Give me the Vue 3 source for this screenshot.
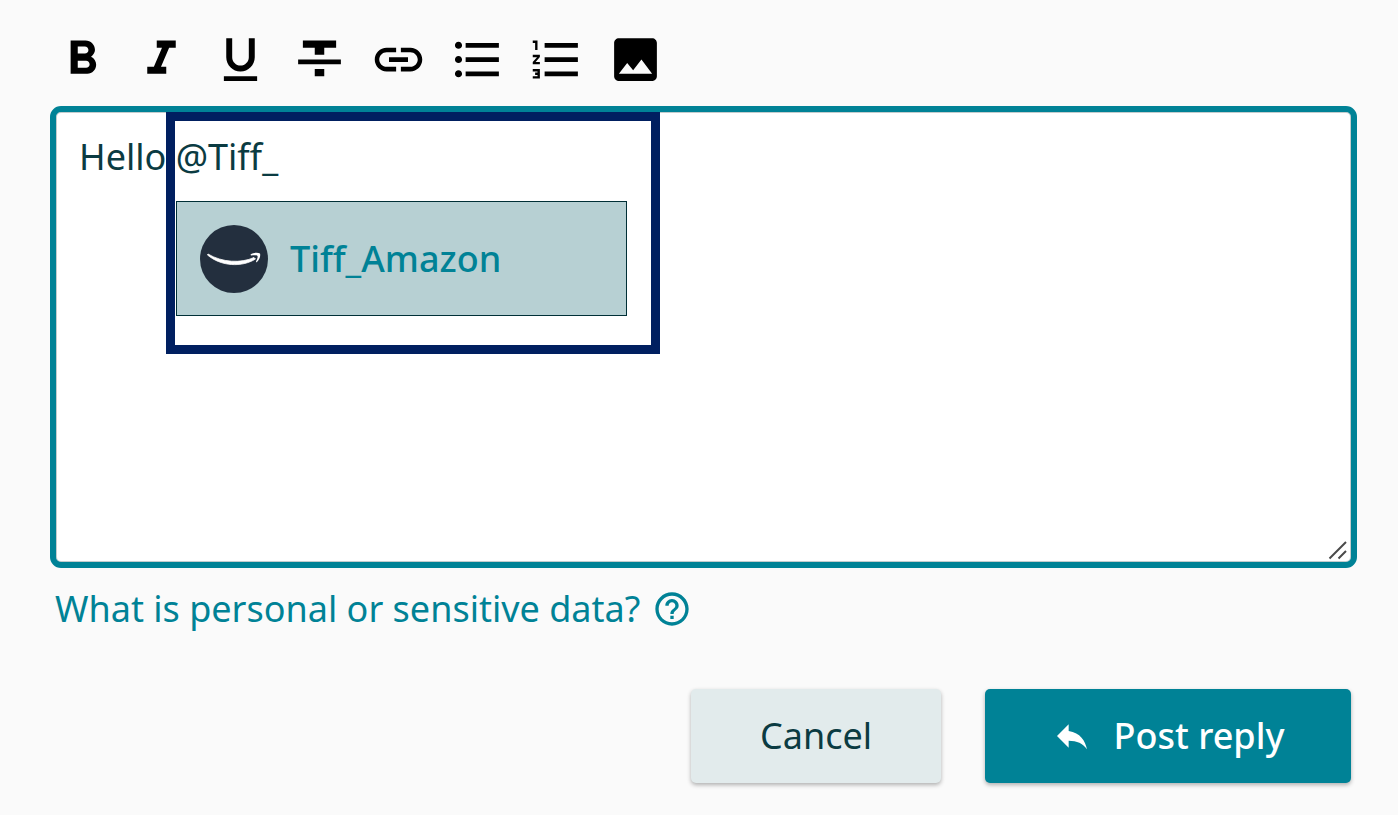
<script setup>
import { ref } from 'vue'

const message = ref('Hello @Tiff_')

const tools = [
  { label: 'Bold', path: 'M15.6 10.79c.97-.67 1.65-1.77 1.65-2.79 0-2.26-1.75-4-4-4H7v14h7.04c2.09 0 3.71-1.7 3.71-3.79 0-1.52-.86-2.82-2.15-3.42zM10 6.5h3c.83 0 1.5.67 1.5 1.5s-.67 1.5-1.5 1.5h-3v-3zm3.5 9H10v-3h3.5c.83 0 1.5.67 1.5 1.5s-.67 1.5-1.5 1.5z' },
  { label: 'Italic', path: 'M10 4v3h2.21l-3.42 8H6v3h8v-3h-2.21l3.42-8H18V4z' },
  { label: 'Underline', path: 'M12 17c3.31 0 6-2.69 6-6V3h-2.5v8c0 1.93-1.57 3.5-3.5 3.5S8.5 12.93 8.5 11V3H6v8c0 3.31 2.69 6 6 6zm-7 2v2h14v-2H5z' },
  { label: 'Strikethrough', path: 'M10 19h4v-3h-4v3zM5 4v3h5v3h4V7h5V4H5zM3 14h18v-2H3v2z' },
  { label: 'Insert link', path: 'M3.9 12c0-1.71 1.39-3.1 3.1-3.1h4V7H7c-2.76 0-5 2.24-5 5s2.24 5 5 5h4v-1.9H7c-1.71 0-3.1-1.39-3.1-3.1zM8 13h8v-2H8v2zm9-6h-4v1.9h4c1.71 0 3.1 1.39 3.1 3.1s-1.39 3.1-3.1 3.1h-4V17h4c2.76 0 5-2.24 5-5s-2.24-5-5-5z' },
  { label: 'Bulleted list', path: 'M4 10.5c-.83 0-1.5.67-1.5 1.5s.67 1.5 1.5 1.5 1.5-.67 1.5-1.5-.67-1.5-1.5-1.5zm0-6c-.83 0-1.5.67-1.5 1.5S3.17 7.5 4 7.5 5.5 6.83 5.5 6 4.83 4.5 4 4.5zm0 12c-.83 0-1.5.68-1.5 1.5s.68 1.5 1.5 1.5 1.5-.68 1.5-1.5-.67-1.5-1.5-1.5zM7 19h14v-2H7v2zm0-6h14v-2H7v2zm0-8v2h14V5H7z' },
  { label: 'Numbered list', path: 'M2 17h2v.5H3v1h1v.5H2v1h3v-4H2v1zm1-9h1V4H2v1h1v3zm-1 3h1.8L2 13.1v.9h3v-1H3.2L5 10.9V10H2v1zm5-6v2h14V5H7zm0 14h14v-2H7v2zm0-6h14v-2H7v2z' },
  { label: 'Insert image', path: 'M21 19V5c0-1.1-.9-2-2-2H5c-1.1 0-2 .9-2 2v14c0 1.1.9 2 2 2h14c1.1 0 2-.9 2-2zM8.5 13.5l2.5 3.01L14.5 12l4.5 6H5l3.5-4.5z' },
]
</script>

<template>
  <main class="composer">
    <div class="toolbar" role="toolbar" aria-label="Formatting">
      <button v-for="tool in tools" :key="tool.label" type="button" class="tool" :aria-label="tool.label">
        <svg viewBox="0 0 24 24" aria-hidden="true"><path :d="tool.path" /></svg>
      </button>
    </div>

    <div class="editor">
      <textarea v-model="message" class="field" aria-label="Reply" spellcheck="false"></textarea>
      <svg class="grip" viewBox="0 0 20 20" aria-hidden="true">
        <path d="M1.5 18.500 18 2M10.500 18.500 18 11" />
      </svg>
      <div class="highlight">
        <button type="button" class="suggestion">
          <svg class="avatar" viewBox="0 0 68 68" aria-hidden="true">
            <circle cx="34" cy="34" r="34" fill="#232f3e" />
            <path d="M8 29C22 37.500 41 38.500 54 32.500L55.500 34C42 42.500 21 41.500 7.500 30Z" fill="#fff" stroke="#fff" stroke-width=".8" stroke-linejoin="round" />
            <path d="M50.500 29.500C53.500 27.500 58 27.500 60 28.500C60.800 31 59.500 35 56.500 37.500L56 36.500C57 34.500 58 32 57.500 31C56.500 30 53.500 30.300 51 30.600Z" fill="#fff" />
          </svg>
          <span>Tiff_Amazon</span>
        </button>
      </div>
    </div>

    <a class="help" href="#personal-data">
      <span>What is personal or sensitive data?</span>
      <svg viewBox="0 0 24 24" aria-hidden="true">
        <path d="M11 18h2v-2h-2v2zm1-16C6.48 2 2 6.48 2 12s4.48 10 10 10 10-4.48 10-10S17.52 2 12 2zm0 18c-4.41 0-8-3.59-8-8s3.59-8 8-8 8 3.59 8 8-3.59 8-8 8zm0-14c-2.21 0-4 1.79-4 4h2c0-1.1.9-2 2-2s2 .9 2 2c0 2-3 1.75-3 5h2c0-2.25 3-2.5 3-5 0-2.21-1.79-4-4-4z" />
      </svg>
    </a>

    <div class="actions">
      <button type="button" class="action cancel">Cancel</button>
      <button type="button" class="action post">
        <svg viewBox="0 0 24 24" aria-hidden="true">
          <path d="M10 9V5l-7 7 7 7v-4.1c5 0 8.5 1.6 11 5.1-1-5-4-10-11-11z" />
        </svg>
        <span>Post reply</span>
      </button>
    </div>
  </main>
</template>

<style>
body {
  background: #fafafa;
}
</style>

<style scoped>
.composer {
  box-sizing: border-box;
  padding: 31px 41px 31px 50px;
  font-family: "Noto Sans", "Open Sans", sans-serif;
  font-size: 36px;
  line-height: 48px;
  color: #0b3b42;
}

button,
textarea {
  margin: 0;
  border: 0;
  font: inherit;
  color: inherit;
}

button {
  padding: 0;
  background: none;
  cursor: pointer;
}

.toolbar {
  display: flex;
  gap: 22px;
  padding-left: 4px;
}

.tool {
  width: 57px;
  height: 57px;
}

.tool svg {
  display: block;
  width: 100%;
  height: 100%;
  fill: #000;
}

.editor {
  position: relative;
  margin-top: 18px;
}

.field {
  display: block;
  box-sizing: border-box;
  width: 100%;
  height: 462px;
  padding: 21px 23px;
  border: 6px solid #008296;
  border-radius: 11px;
  background: #fff;
  box-shadow: inset 0 0 0 1px #c4cccd;
  outline: none;
  resize: none;
}

.grip {
  position: absolute;
  right: 9px;
  bottom: 8px;
  width: 20px;
  height: 20px;
  fill: none;
  stroke: #4a4a4a;
  stroke-width: 2;
}

.highlight {
  position: absolute;
  top: 6px;
  left: 116px;
  box-sizing: border-box;
  width: 494px;
  padding: 80px 24px 29px 1px;
  border: 9px solid #001f60;
}

.suggestion {
  display: flex;
  align-items: center;
  gap: 22px;
  box-sizing: border-box;
  width: 100%;
  height: 115px;
  padding: 0 23px;
  border: 1px solid #002f36;
  background: #b7d0d3;
  color: #008296;
  font-weight: 500;
}

.avatar {
  width: 68px;
  height: 68px;
}

.help {
  display: inline-flex;
  align-items: center;
  gap: 12px;
  margin-top: 17px;
  padding-left: 5px;
  color: #008296;
  text-decoration: none;
}

.help svg {
  width: 40px;
  height: 40px;
  fill: currentColor;
}

.actions {
  display: flex;
  justify-content: flex-end;
  gap: 44px;
  margin-top: 56px;
  padding-right: 6px;
}

.action {
  display: flex;
  align-items: center;
  justify-content: center;
  height: 94px;
  border-radius: 5px;
  box-shadow: 0 2px 4px rgba(0, 0, 0, 0.3);
}

.cancel {
  width: 250px;
  background: #e2ebec;
}

.post {
  gap: 22px;
  width: 366px;
  background: #008296;
  color: #fff;
  font-weight: 500;
}

.post svg {
  width: 40px;
  height: 40px;
  fill: currentColor;
}
</style>
